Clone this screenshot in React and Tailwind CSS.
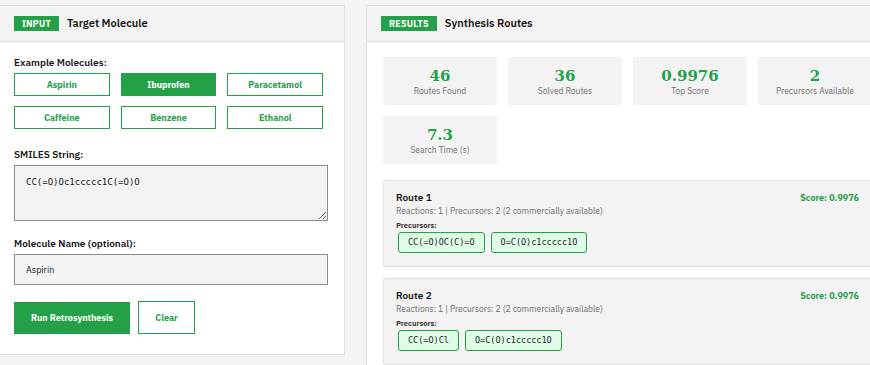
const sans = "font-['IBM_Plex_Sans','Noto_Sans',Roboto,sans-serif]";
const mono = "font-['DejaVu_Sans_Mono','Liberation_Mono',monospace]";

const examples = ["Aspirin", "Ibuprofen", "Paracetamol", "Caffeine", "Benzene", "Ethanol"];

const stats = [
  { value: "46", label: "Routes Found" },
  { value: "36", label: "Solved Routes" },
  { value: "0.9976", label: "Top Score" },
  { value: "2", label: "Precursors Available" },
  { value: "7.3", label: "Search Time (s)" },
];

const routes = [
  { name: "Route 1", precursors: ["CC(=O)OC(C)=O", "O=C(O)c1ccccc1O"] },
  { name: "Route 2", precursors: ["CC(=O)Cl", "O=C(O)c1ccccc1O"] },
];

function PanelHeader({ badge, title }) {
  return (
    <div className="h-9 flex items-center gap-2 px-[14px] bg-[#f3f3f3] border-b border-[#e0e0e0]">
      <span className="bg-[#24a148] text-white text-[9px] font-bold tracking-wide px-2 py-[2px] leading-[11px]">
        {badge}
      </span>
      <span className="text-[11px] font-semibold text-[#161616]">{title}</span>
    </div>
  );
}

function Label({ children }) {
  return <div className="text-[10px] leading-[12px] font-semibold text-[#161616] mb-[4px]">{children}</div>;
}

export default function App() {
  return (
    <div className={`w-[870px] h-[365px] overflow-hidden bg-[#f4f4f4] ${sans}`}>
      <div className="flex gap-[21px] pt-[5px] w-[900px]">
        {/* Input panel */}
        <div className="w-[345px] h-[350px] shrink-0 bg-white border border-l-0 border-[#e0e0e0]">
          <PanelHeader badge="INPUT" title="Target Molecule" />
          <div className="px-[14px] pt-[15px]">
            <Label>Example Molecules:</Label>
            <div className="grid grid-cols-3 gap-x-[11px] gap-y-[10px] w-[309px]">
              {examples.map((m) => (
                <button
                  key={m}
                  className={`h-[23px] text-[9px] font-bold border ${
                    m === "Ibuprofen"
                      ? "bg-[#24a148] border-[#24a148] text-white"
                      : "bg-white border-[#24a148] text-[#24a148]"
                  }`}
                >
                  {m}
                </button>
              ))}
            </div>

            <div className="mt-[20px]">
              <Label>SMILES String:</Label>
              <textarea
                className={`block w-[314px] h-[56px] bg-[#f3f3f3] border border-[#8d8d8d] px-[11px] pt-[10px] text-[9px] leading-[12px] text-[#161616] resize-y outline-none ${mono}`}
                defaultValue="CC(=O)Oc1ccccc1C(=O)O"
              />
            </div>

            <div className="mt-[17px]">
              <Label>Molecule Name (optional):</Label>
              <input
                className="block w-[314px] h-[31px] bg-[#f3f3f3] border border-[#8d8d8d] px-[11px] text-[9px] text-[#161616] outline-none"
                defaultValue="Aspirin"
              />
            </div>

            <div className="flex items-center gap-2 mt-[16px]">
              <button className="w-[116px] h-[32px] bg-[#24a148] text-white text-[9px] font-bold">
                Run Retrosynthesis
              </button>
              <button className="w-[57px] h-[33px] bg-white border border-[#24a148] text-[#24a148] text-[9px] font-bold">
                Clear
              </button>
            </div>
          </div>
        </div>

        {/* Results panel */}
        <div className="w-[520px] h-[400px] shrink-0 bg-white border border-[#e0e0e0]">
          <PanelHeader badge="RESULTS" title="Synthesis Routes" />
          <div className="pl-[16px] pt-[15px]">
            <div className="grid grid-cols-[114px_114px_114px_114px] gap-x-[11px] gap-y-[11px]">
              {stats.map((s) => (
                <div
                  key={s.label}
                  className="h-[48px] bg-[#f3f3f3] rounded-[2px] flex flex-col items-center pt-[10px]"
                >
                  <div className="text-[15px] leading-[18px] font-bold text-[#24a148] font-['DejaVu_Serif','Liberation_Serif',serif]">
                    {s.value}
                  </div>
                  <div className="text-[8.5px] leading-[12px] text-[#6f6f6f]">{s.label}</div>
                </div>
              ))}
            </div>

            <div className="flex flex-col gap-[11px] mt-[16px]">
              {routes.map((r) => (
                <div
                  key={r.name}
                  className="w-[489px] h-[87px] bg-[#f3f3f3] border border-[#e0e0e0] rounded-[2px] pl-[12px] pr-[12px] pt-[11px]"
                >
                  <div className="flex justify-between leading-[12px]">
                    <span className="text-[10px] font-semibold text-[#161616]">{r.name}</span>
                    <span className="text-[9px] font-bold text-[#24a148]">Score: 0.9976</span>
                  </div>
                  <div className="text-[8.5px] leading-[12px] text-[#6f6f6f] mt-[1px]">
                    Reactions: 1 | Precursors: 2 (2 commercially available)
                  </div>
                  <div className="text-[7.5px] leading-[10px] font-bold text-[#393939] mt-[3px]">Precursors:</div>
                  <div className="flex gap-[6px] mt-[2px] pl-[2px]">
                    {r.precursors.map((p) => (
                      <span
                        key={p}
                        className={`h-[21px] px-[9px] flex items-center bg-[#defbe6] border border-[#24a148] rounded-[3px] text-[8.5px] text-[#262626] ${mono}`}
                      >
                        {p}
                      </span>
                    ))}
                  </div>
                </div>
              ))}
            </div>
          </div>
        </div>
      </div>
    </div>
  );
}
